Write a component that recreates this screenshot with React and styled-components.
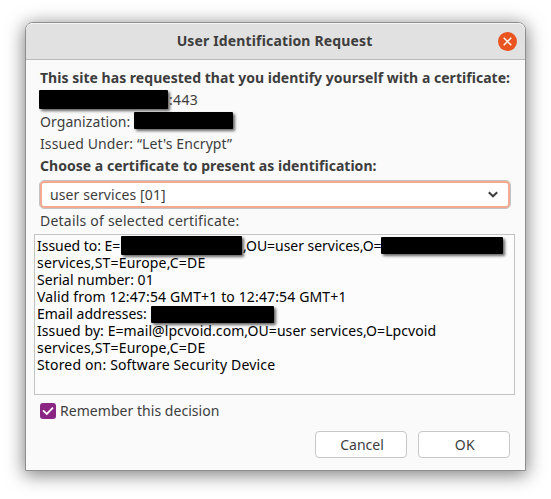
import React, { useState } from "react";
import styled, { createGlobalStyle } from "styled-components";

const GlobalStyle = createGlobalStyle`
  * { box-sizing: border-box; }
  body {
    margin: 0;
    background: #fff;
    color: #3d3d3d;
    font: 14px/22px "Noto Sans", "Open Sans", sans-serif;
  }
  button { font: inherit; color: inherit; }
`;

const Desktop = styled.main`
  width: 551px;
  height: 499px;
  padding: 22px 25px 28px;
  overflow: hidden;
`;

const Dialog = styled.section`
  display: flex;
  flex-direction: column;
  width: 501px;
  height: 449px;
  border: 1px solid #8e8e8e;
  border-radius: 8px 8px 0 0;
  background: #fafafa;
  box-shadow: 0 3px 18px 1px rgba(0, 0, 0, 0.5);
`;

const TitleBar = styled.header`
  display: flex;
  align-items: center;
  justify-content: flex-end;
  flex: none;
  height: 37px;
  padding-right: 8px;
  border-bottom: 1px solid #b8b8b8;
  border-radius: 7px 7px 0 0;
  background: #e1e1e1;
  box-shadow: inset 0 1px #f4f4f4;
`;

const Title = styled.h1`
  flex: 1;
  margin: 0;
  padding-left: 25px;
  font-size: 14px;
  line-height: 22px;
  font-weight: 700;
  letter-spacing: 0.146px;
  text-align: center;
`;

const CloseButton = styled.button`
  display: flex;
  width: 19px;
  height: 19px;
  padding: 0;
  border: 0;
  border-radius: 50%;
  background: #e95420;
`;

const Body = styled.div`
  display: flex;
  flex-direction: column;
  padding: 7px 10px 0 8px;
`;

const Line = styled.div`
  display: flex;
  height: 22px;
  padding-left: ${(p) => (p.$flush ? 5 : 6)}px;
  font-weight: ${(p) => (p.$bold ? 700 : 400)};
`;

const Text = styled.span`
  flex: none;
  width: ${(p) => (p.$width ? `${p.$width}px` : "auto")};
  margin-left: ${(p) => p.$left || 0}px;
  letter-spacing: ${(p) => p.$track || 0}px;
  white-space: pre;
`;

const Redaction = styled.span`
  flex: none;
  width: ${(p) => p.$width}px;
  height: ${(p) => p.$height}px;
  margin-top: ${(p) => p.$top || 0}px;
  border-radius: 1px;
  background: #000;
  box-shadow: 2px 2px 3px rgba(0, 0, 0, 0.6);
`;

const Select = styled.button`
  display: flex;
  align-items: center;
  justify-content: space-between;
  height: 29px;
  margin: 3px 4px 1px 5px;
  padding: 0 11px 0 10px;
  border: 1px solid #c3c3c3;
  border-radius: 5px;
  background: #fff;
  box-shadow: inset 0 0 0 2px #f4aa90;
  text-align: left;
`;

const Details = styled.div`
  height: 161px;
  margin: 2px 0 5px;
  padding: 2px 2px;
  border: 1px solid #c3c3c3;
  background: #fcfcfc;
  color: #000;
  line-height: 17px;
`;

const DetailLine = styled.div`
  display: flex;
  height: 17px;
`;

const Remember = styled.label`
  display: flex;
  align-items: center;
  height: 22px;
  padding-left: 6px;
`;

const CheckBox = styled.button`
  display: flex;
  width: 16px;
  height: 16px;
  margin-right: 4px;
  padding: 0;
  border: 0;
  border-radius: 3px;
  background: ${(p) => (p.$checked ? "#8a2583" : "#fff")};
`;

const Actions = styled.footer`
  display: flex;
  justify-content: flex-end;
  gap: 11px;
  margin-top: 9px;
  padding-right: 5px;
`;

const ActionButton = styled.button`
  width: 92px;
  height: 27px;
  padding: 1px 0 0 2px;
  border: 1px solid #c8c8c8;
  border-radius: 4px;
  background: #fff;
  line-height: 22px;
  letter-spacing: ${(p) => p.$track || 0}px;
`;

export default function App() {
  const [remember, setRemember] = useState(true);
  return (
    <>
      <GlobalStyle />
      <Desktop>
        <Dialog>
          <TitleBar>
            <Title>User Identification Request</Title>
            <CloseButton aria-label="Close">
              <svg width="19" height="19" viewBox="0 0 19 19">
                <path d="M5.7 5.7l7.6 7.6M13.3 5.7l-7.6 7.6" stroke="#fff" strokeWidth="1.4" />
              </svg>
            </CloseButton>
          </TitleBar>
          <Body>
            <Line $bold>
              <Text $track={0.028}>This site has requested that you identify yourself with a certificate:</Text>
            </Line>
            <Line $flush>
              <Redaction $width={129} $height={19} $top={1} />
              <Text $left={1} $track={0.35}>:443</Text>
            </Line>
            <Line>
              <Text $width={94} $track={0.081}>Organization:</Text>
              <Redaction $width={99} $height={17} $top={1} />
            </Line>
            <Line>
              <Text $track={0.1}>Issued Under: “Let's Encrypt”</Text>
            </Line>
            <Line $bold>
              <Text $track={0.031}>Choose a certificate to present as identification:</Text>
            </Line>
            <Select>
              <Text $track={0.096}>user services [01]</Text>
              <svg width="12" height="12" viewBox="0 0 12 12">
                <path d="M1.8 3.3L6 7.3l4.2-4" fill="none" stroke="#3d3d3d" strokeWidth="2" />
              </svg>
            </Select>
            <Line>
              <Text $track={0.22}>Details of selected certificate:</Text>
            </Line>
            <Details>
              <DetailLine>
                <Text $width={84} $track={-0.03}>Issued to: E=</Text>
                <Redaction $width={121} $height={19} $top={-1} />
                <Text $width={138} $left={1} $track={-0.04}>,OU=user services,O=</Text>
                <Redaction $width={122} $height={17} />
              </DetailLine>
              <DetailLine>
                <Text $track={0.17}>services,ST=Europe,C=DE</Text>
              </DetailLine>
              <DetailLine>
                <Text $track={0.03}>Serial number: 01</Text>
              </DetailLine>
              <DetailLine>
                <Text $track={0.14}>Valid from 12:47:54 GMT+1 to 12:47:54 GMT+1</Text>
              </DetailLine>
              <DetailLine>
                <Text $width={114} $track={0}>Email addresses:</Text>
                <Redaction $width={123} $height={17} $top={1} />
              </DetailLine>
              <DetailLine>
                <Text $track={0.076}>Issued by: E=mail@lpcvoid.com,OU=user services,O=Lpcvoid</Text>
              </DetailLine>
              <DetailLine>
                <Text $track={0.17}>services,ST=Europe,C=DE</Text>
              </DetailLine>
              <DetailLine>
                <Text $track={0.16}>Stored on: Software Security Device</Text>
              </DetailLine>
            </Details>
            <Remember>
              <CheckBox
                role="checkbox"
                aria-checked={remember}
                aria-label="Remember this decision"
                $checked={remember}
                onClick={() => setRemember(!remember)}
              >
                <svg width="16" height="16" viewBox="0 0 16 16">
                  <path d="M3 7.3l3.8 3.6L13 4.6" fill="none" stroke="#fff" strokeWidth="1.8" />
                </svg>
              </CheckBox>
              <Text $track={0.04}>Remember this decision</Text>
            </Remember>
            <Actions>
              <ActionButton>Cancel</ActionButton>
              <ActionButton $track={0.5}>OK</ActionButton>
            </Actions>
          </Body>
        </Dialog>
      </Desktop>
    </>
  );
}
